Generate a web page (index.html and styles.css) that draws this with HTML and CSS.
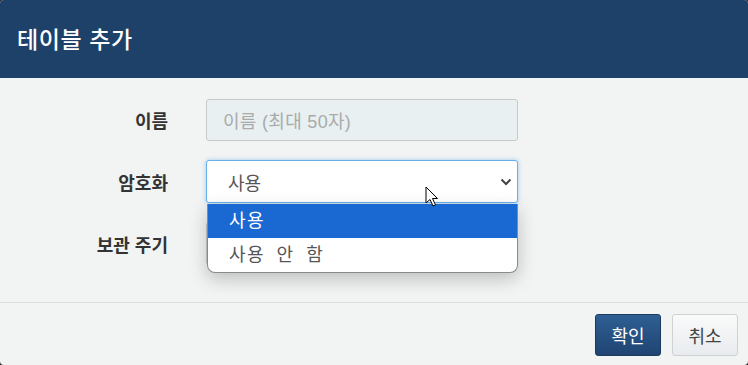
FILE: index.html
```html
<!DOCTYPE html>
<html lang="ko">
  <head>
    <meta charset="UTF-8" />
    <title>테이블 추가</title>
    <link rel="stylesheet" href="styles.css">
  </head>
  <body>
    <div class="dialog">
      <header class="dialog-header">
        <h1>테이블 추가</h1>
      </header>

      <main class="dialog-body">
        <div class="form-row">
          <label class="form-label">이름</label>
          <div class="form-field">
            <div class="input input-disabled">이름 (최대 50자)</div>
          </div>
        </div>

        <div class="form-row">
          <label class="form-label">암호화</label>
          <div class="form-field">
            <div class="input select-focus">
              <span>사용</span>
              <svg class="chevron" width="12" height="8" viewBox="0 0 12 8">
                <path d="M1.5 1.5 L6 6 L10.5 1.5" fill="none" stroke="#444" stroke-width="2" />
              </svg>
            </div>
            <ul class="dropdown">
              <li class="option active">사용</li>
              <li class="option">사용 안 함</li>
            </ul>
            <!-- mouse pointer -->
            <svg class="pointer" width="14" height="22" viewBox="0 0 14 22">
              <path d="M1 1 L1 17 L5 13.5 L8 20 L10.5 19 L7.5 12.5 L12.5 12.5 Z" fill="#fff" stroke="#000" stroke-width="1" />
            </svg>
          </div>
        </div>

        <div class="form-row">
          <label class="form-label">보관 주기</label>
          <div class="form-field">
            <div class="input"></div>
          </div>
        </div>
      </main>

      <footer class="dialog-footer">
        <button class="btn btn-primary">확인</button>
        <button class="btn btn-default">취소</button>
      </footer>
    </div>
  </body>
</html>
```

FILE: styles.css
```css
body {
  margin: 0;
  padding: 0;
  background-color: #2a2a2a;
  font-family: "Liberation Sans", "Noto Sans CJK KR", sans-serif;
  color: #333;
}

/* Dialog frame */
.dialog {
  width: 748px;
  height: 365px;
  background-color: #f2f3f3;
  border-radius: 4px;
  overflow: hidden;
  display: flex;
  flex-direction: column;
}

.dialog-header {
  flex-shrink: 0;
  height: 78px;
  background-color: #1e4169;
  color: #fff;
  display: flex;
  align-items: center;
  padding: 0 17px;
  box-sizing: border-box;
}

.dialog-header h1 {
  margin: 0 0 3px;
  font-size: 23px;
  font-weight: 500;
  letter-spacing: 0.6px;
}

/* Form */
.dialog-body {
  flex-shrink: 0;
  padding: 21px 0 0;
  height: 225px;
  box-sizing: border-box;
  border-bottom: 1px solid #dcdede;
}

.form-row {
  display: flex;
  align-items: center;
  margin-bottom: 19px;
}

.form-label {
  width: 168px;
  text-align: right;
  font-size: 18px;
  font-weight: 700;
  color: #333;
  margin-right: 38px;
}

.form-field {
  position: relative;
  width: 312px;
}

.input {
  height: 43px;
  box-sizing: border-box;
  border: 1px solid #c8c8c8;
  border-radius: 3px;
  background-color: #fff;
  padding: 0 21px;
  display: flex;
  align-items: center;
  font-size: 18px;
  color: #555;
}

.input-disabled {
  background-color: #e8f0f2;
  color: #aaa;
  height: 42px;
  padding-left: 16px;
  letter-spacing: 0.3px;
}

.select-focus {
  border-color: #66afe9;
  box-shadow: 0 0 4px rgba(102, 175, 233, 0.6);
  justify-content: space-between;
  padding-right: 5px;
}

/* Open select list */
.dropdown {
  position: absolute;
  top: 44px;
  left: 1px;
  right: 0;
  margin: 0;
  padding: 0;
  list-style: none;
  background-color: #fff;
  border: 1px solid #8a8a8a;
  border-top: none;
  border-radius: 0 0 8px 8px;
  overflow: hidden;
  box-shadow: 0 6px 18px rgba(0, 0, 0, 0.22);
  z-index: 2;
}

.option {
  height: 34px;
  line-height: 34px;
  padding: 0 21px;
  font-size: 18px;
  color: #555;
  letter-spacing: 1.5px;
  word-spacing: 5px;
}

.option.active {
  background-color: #1a69d3;
  color: #fff;
}

.pointer {
  position: absolute;
  left: 219px;
  top: 26px;
  z-index: 3;
}

/* Footer buttons */
.dialog-footer {
  flex: 1;
  display: flex;
  justify-content: flex-end;
  align-items: flex-start;
  gap: 11px;
  padding: 11px 10px 0 0;
}

.btn {
  height: 42px;
  min-width: 66px;
  padding: 0 14px;
  border-radius: 3px;
  font-family: inherit;
  font-size: 18px;
  cursor: pointer;
}

.btn-primary {
  background: linear-gradient(#2f5f93, #1f4472);
  border: 1px solid #1a3a60;
  color: #fff;
}

.btn-default {
  background: linear-gradient(#fafafa, #e8ebee);
  border: 1px solid #cfd2d4;
  color: #444;
}
```
